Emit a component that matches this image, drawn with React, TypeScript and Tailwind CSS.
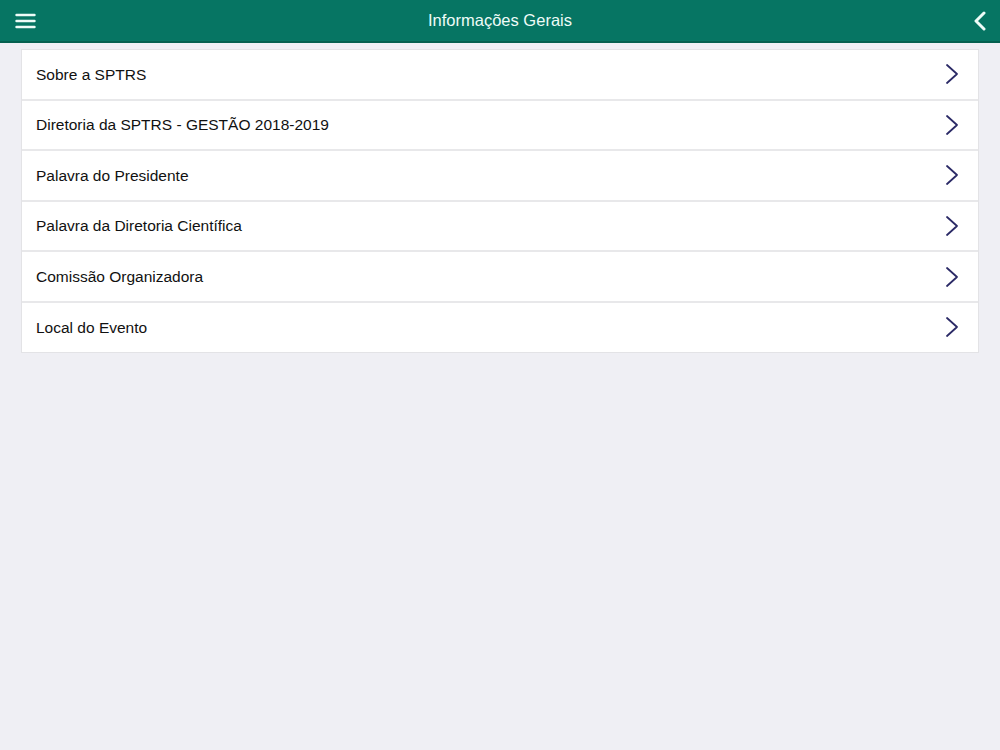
import React from 'react';

const items = [
  'Sobre a SPTRS',
  'Diretoria da SPTRS - GESTÃO 2018-2019',
  'Palavra do Presidente',
  'Palavra da Diretoria Científica',
  'Comissão Organizadora',
  'Local do Evento',
];

const Chevron = () => (
  <svg width="16" height="22" viewBox="0 0 16 22" fill="none" stroke="#2b2a66" strokeWidth={1.8} strokeLinecap="round" strokeLinejoin="round">
    <path d="M3 2l10 9-10 9" />
  </svg>
);

export default function App() {
  return (
    <div className="w-[1000px] h-[750px] bg-[#efeff4] font-['Liberation_Sans',Arial,sans-serif]">
      <header className="h-[43px] bg-[#067563] border-b-2 border-[#05604f] flex items-center px-[15px] text-[#eefcf8]">
        <div className="w-[30px]">
          <svg width="21" height="16" viewBox="0 0 21 16" fill="none" stroke="currentColor" strokeWidth={2.4} strokeLinecap="round">
            <path d="M1.5 2h18M1.5 8h18M1.5 14h18" />
          </svg>
        </div>
        <h1 className="flex-1 text-center text-[16.5px] leading-none">Informações Gerais</h1>
        <div className="w-[30px] flex justify-end">
          <svg width="14" height="20" viewBox="0 0 14 20" fill="none" stroke="currentColor" strokeWidth={3} strokeLinecap="round" strokeLinejoin="round" className="mr-[-2px]">
            <path d="M11 2L3 10l8 8" />
          </svg>
        </div>
      </header>
      <div className="mx-[21px] mt-[6px] bg-white border border-[#e3e3e6]">
        {items.map((label, i) => (
          <div
            key={label}
            className={`flex items-center justify-between pl-[14px] pr-[18px] ${i < items.length - 1 ? 'h-[50.6px] border-b-2 border-[#e8e8ea]' : 'h-[49px]'}`}
          >
            <span className="text-[15.5px] text-[#111]">{label}</span>
            <Chevron />
          </div>
        ))}
      </div>
    </div>
  );
}
